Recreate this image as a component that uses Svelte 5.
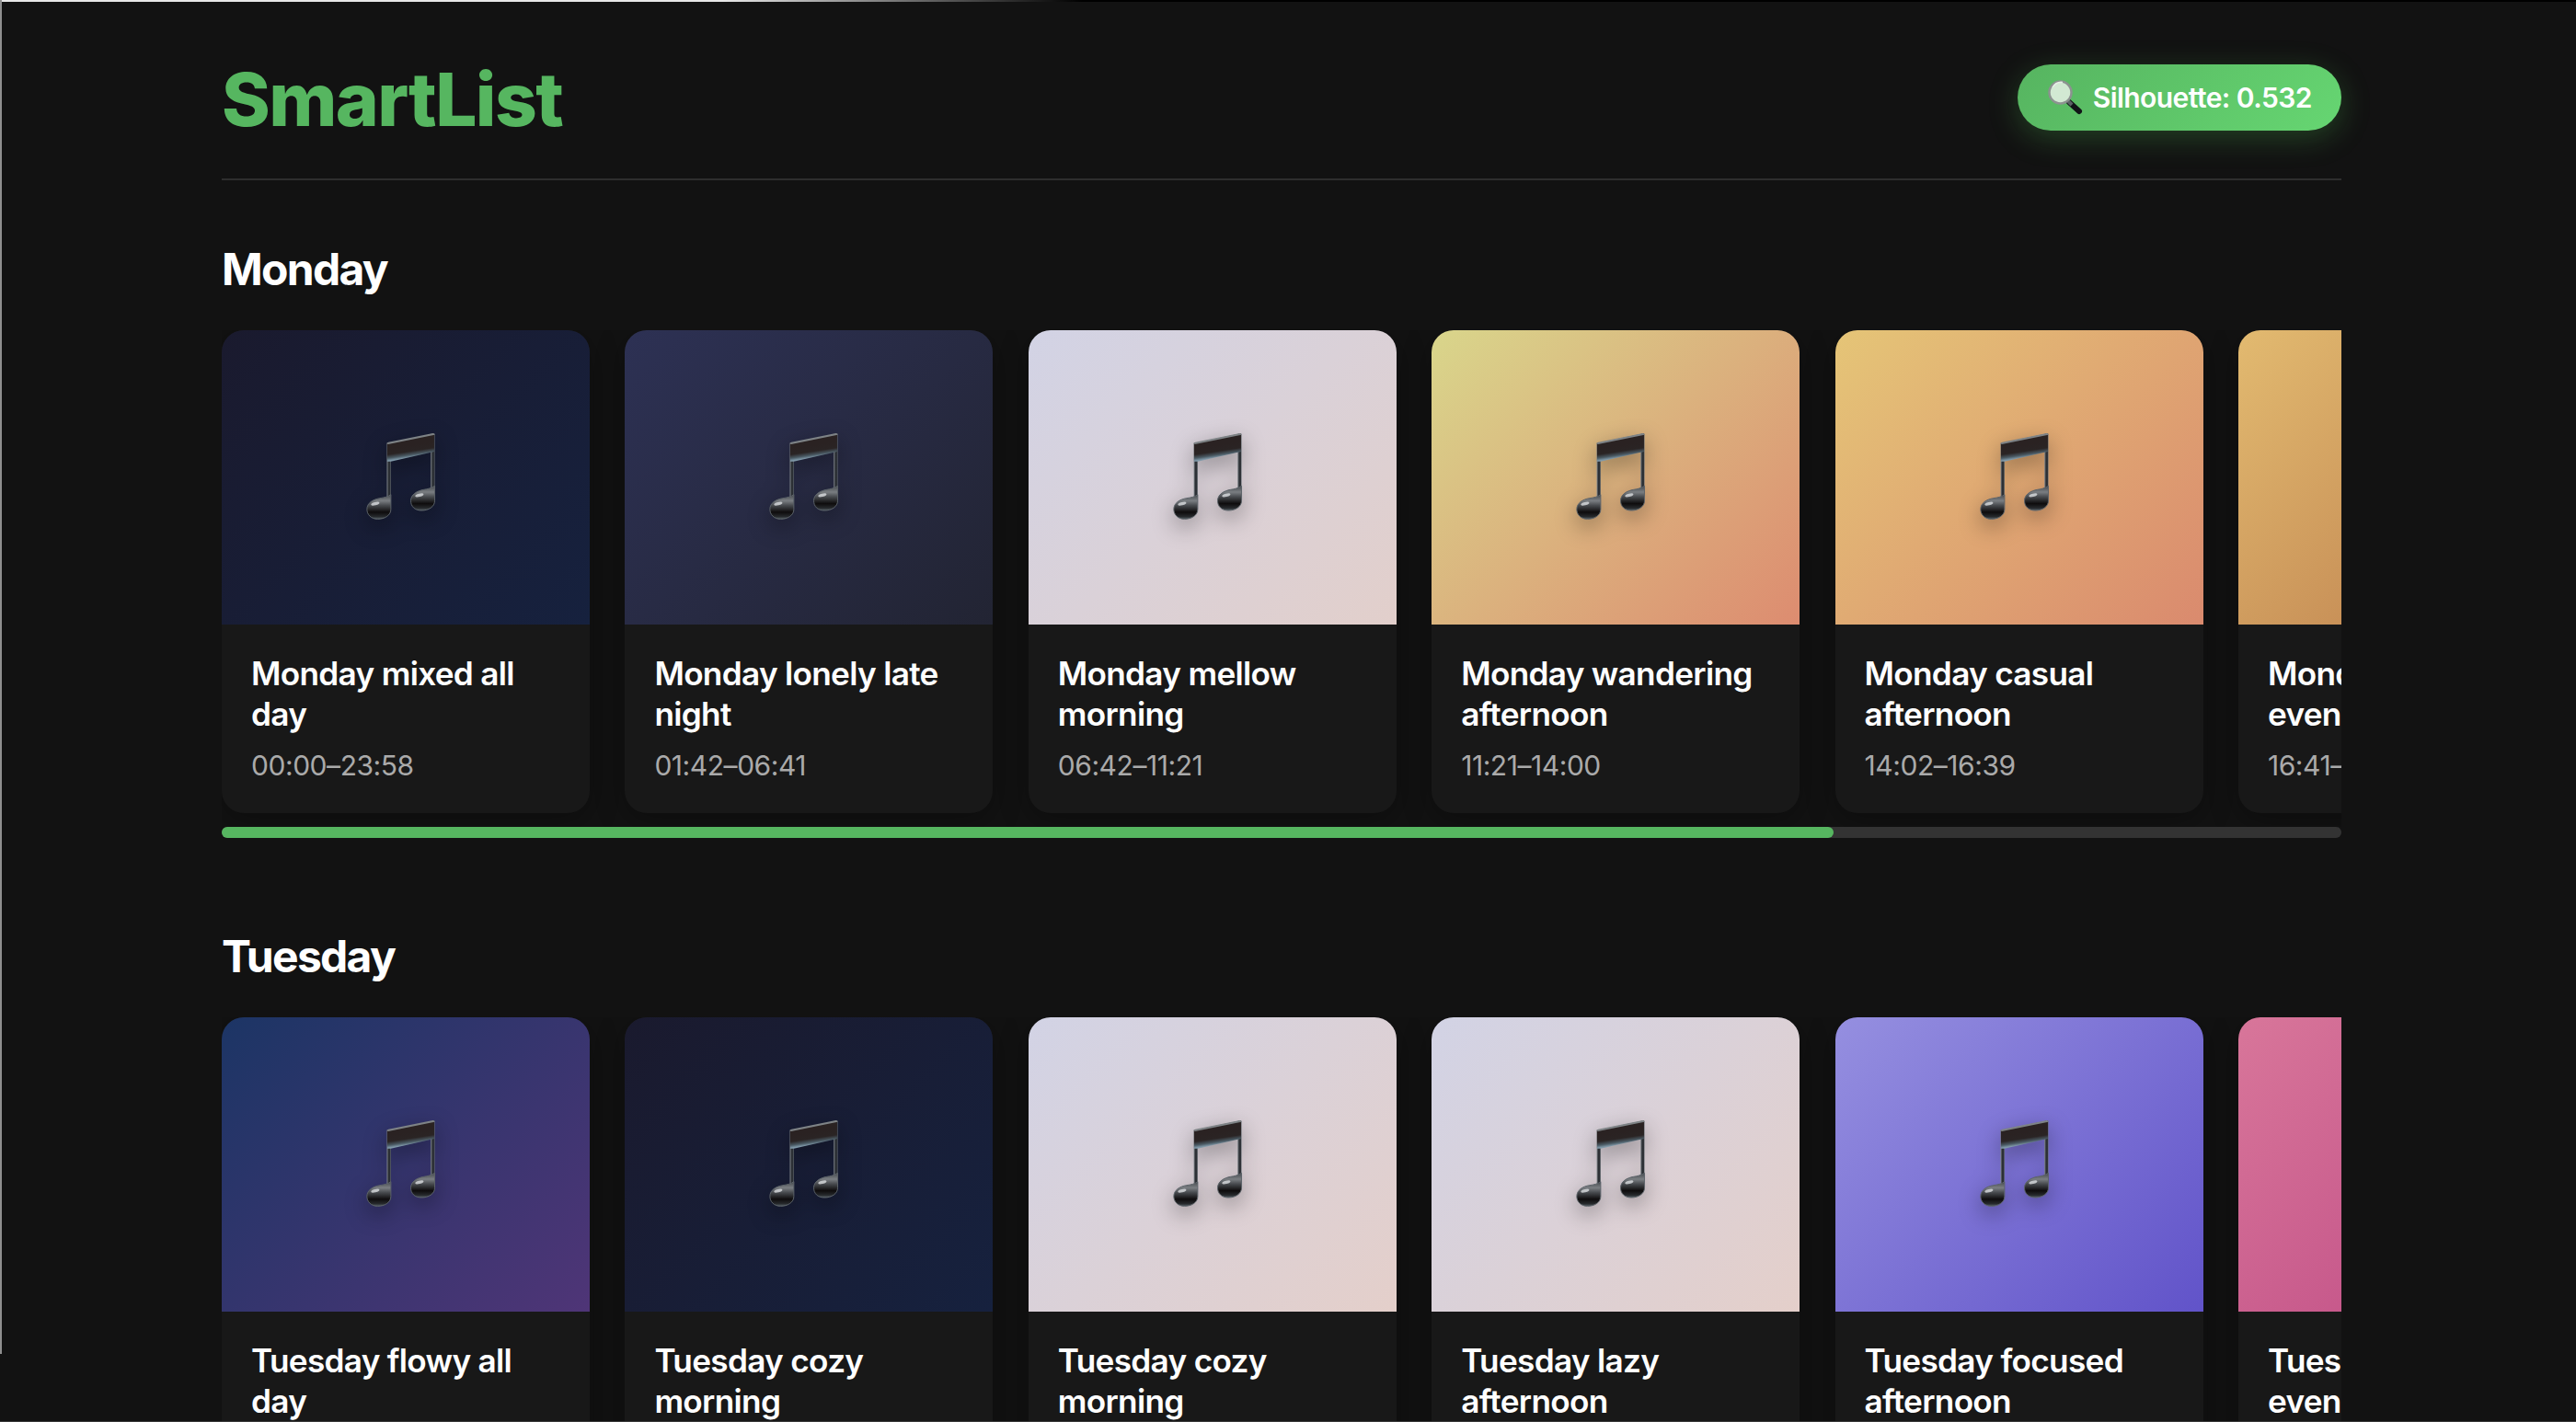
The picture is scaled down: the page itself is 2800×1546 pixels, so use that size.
<script>
  const days = [
    {
      name: 'Monday',
      lists: [
        { title: 'Monday mixed all day', time: '00:00–23:58', from: '#1a1a2e', to: '#16213e' },
        { title: 'Monday lonely late night', time: '01:42–06:41', from: '#2d3154', to: '#222433' },
        { title: 'Monday mellow morning', time: '06:42–11:21', from: '#d2d3e5', to: '#e2cfcb' },
        { title: 'Monday wandering afternoon', time: '11:21–14:00', from: '#d9d68b', to: '#dd8c70' },
        { title: 'Monday casual afternoon', time: '14:02–16:39', from: '#e5c577', to: '#da8a6e' },
        { title: 'Monday chill evening', time: '16:41–19:58', from: '#e2ba70', to: '#b87648' },
        { title: 'Monday dreamy night', time: '20:00–23:59', from: '#2d3154', to: '#16213e' }
      ]
    },
    {
      name: 'Tuesday',
      lists: [
        { title: 'Tuesday flowy all day', time: '00:00–23:57', from: '#1c3565', to: '#4f3577' },
        { title: 'Tuesday cozy morning', time: '02:10–06:35', from: '#1a1a2e', to: '#16213e' },
        { title: 'Tuesday cozy morning', time: '06:36–11:12', from: '#d2d3e5', to: '#e4cfca' },
        { title: 'Tuesday lazy afternoon', time: '11:13–14:05', from: '#d2d3e5', to: '#e4cfca' },
        { title: 'Tuesday focused afternoon', time: '14:06–16:44', from: '#958fe0', to: '#6153c9' },
        { title: 'Tuesday chill evening', time: '16:45–19:50', from: '#d8769a', to: '#bc4682' },
        { title: 'Tuesday dreamy night', time: '19:51–23:59', from: '#2d3154', to: '#16213e' }
      ]
    }
  ];

  // thumb is the visible part of the 7 card strip
  const cardWidth = 400;
  const gap = 38.4;
  const viewWidth = 2304;
  const thumbWidth = (list) => (viewWidth / (list.length * cardWidth + (list.length - 1) * gap)) * 100;
</script>

{#snippet note()}
  <svg class="note" viewBox="-6.6 -6 480 480" aria-hidden="true">
    <defs>
      <linearGradient id="stem" x1="0" x2="1" y1="0" y2="0">
        <stop offset="0" stop-color="#858b90" />
        <stop offset="0.4" stop-color="#2c3035" />
        <stop offset="0.75" stop-color="#2c3035" />
        <stop offset="1" stop-color="#646b71" />
      </linearGradient>
      <linearGradient id="beam" gradientUnits="userSpaceOnUse" x1="250" y1="128" x2="256" y2="168">
        <stop offset="0" stop-color="#2a2222" />
        <stop offset="0.5" stop-color="#2a2424" />
        <stop offset="0.8" stop-color="#4a5a64" />
        <stop offset="1" stop-color="#7f98a8" />
      </linearGradient>
      <linearGradient id="head" x1="0" x2="0" y1="0" y2="1">
        <stop offset="0" stop-color="#44484c" />
        <stop offset="0.25" stop-color="#7a7e82" />
        <stop offset="0.45" stop-color="#46494d" />
        <stop offset="0.72" stop-color="#0e0c0d" />
        <stop offset="0.9" stop-color="#26292c" />
        <stop offset="1" stop-color="#545e64" />
      </linearGradient>
    </defs>
    <rect x="172" y="122" width="13" height="175" fill="url(#stem)" />
    <rect x="315" y="92" width="13" height="178" fill="url(#stem)" />
    <path d="M173 122 L326 91 V150 L185 182 H173 Z" fill="url(#beam)" />
    <path d="M172 124 Q172 120 177 119 L322 90 Q328 89 328 95 L324 96 L176 126 Z" fill="#7e8386" />
    <path
      class="head"
      d="M328 262 V310 C328 330 308 342 285 342 C262 342 250 328 250 310 C250 290 270 278 292 274 C305 272 315 270 328 262 Z"
      fill="url(#head)"
    />
    <path
      class="head"
      d="M185 290 V338 C185 358 165 370 142 370 C120 370 107 355 107 338 C107 318 125 306 149 302 C162 300 175 298 185 290 Z"
      fill="url(#head)"
    />
    <ellipse cx="278" cy="292" rx="14" ry="5" transform="rotate(-14 278 292)" fill="#e4e7e9" opacity="0.75" />
    <ellipse cx="134" cy="320" rx="14" ry="5" transform="rotate(-14 134 320)" fill="#e4e7e9" opacity="0.75" />
  </svg>
{/snippet}

<div class="edge-top"></div>
<div class="edge-left"></div>
<div class="edge-bottom"></div>

<main class="page">
  <header class="header">
    <h1>SmartList</h1>
    <div class="score">
      <svg class="glass" viewBox="0 0 40 40" aria-hidden="true">
        <path d="M24 25 L35 35" stroke="#111417" stroke-width="6" stroke-linecap="round" />
        <path d="M23 24 L27 28" stroke="#5b6166" stroke-width="4" />
        <circle cx="14.5" cy="14.5" r="12" fill="#d2e9d3" stroke="#8c9290" stroke-width="2.5" />
        <path d="M6 9 A11 11 0 0 1 17 3.5" fill="none" stroke="#e6ece6" stroke-width="1.5" />
      </svg>
      <span>Silhouette: 0.532</span>
    </div>
  </header>

  {#each days as day}
    <section class="day">
      <h2>{day.name}</h2>
      <div class="row">
        {#each day.lists as list}
          <article class="card">
            <div class="cover" style="background: linear-gradient(135deg, {list.from}, {list.to})">
              {@render note()}
            </div>
            <div class="info">
              <h3>{list.title}</h3>
              <p>{list.time}</p>
            </div>
          </article>
        {/each}
      </div>
      <div class="track">
        <div class="thumb" style="width: {thumbWidth(day.lists)}%"></div>
      </div>
    </section>
  {/each}
</main>

<style>
  :global(body) {
    background: #121212;
    height: 1546px;
    overflow: hidden;
  }
  .page {
    width: 2304px;
    margin-left: 241px;
    padding-top: 58px;
    font-family: Inter, "Liberation Sans", sans-serif;
    color: #fff;
  }
  .edge-top {
    position: absolute;
    top: 0;
    left: 0;
    right: 0;
    height: 2px;
    background: linear-gradient(to right, #e8e8e8 0%, #e8e8e8 28%, #000 42%);
  }
  .edge-left {
    position: absolute;
    top: 0;
    left: 0;
    width: 2px;
    height: 1472px;
    background: #8f8f8f;
  }
  .edge-bottom {
    position: absolute;
    bottom: 0;
    left: 0;
    right: 0;
    height: 1px;
    background: #3a3a3a;
  }
  .header {
    display: flex;
    align-items: center;
    justify-content: space-between;
    padding-bottom: 40px;
    border-bottom: 2px solid #2e2e2e;
  }
  h1 {
    margin: 0;
    padding-top: 2px;
    margin-bottom: -2px;
    font-size: 80px;
    line-height: 96px;
    font-weight: 800;
    letter-spacing: -1.6px;
    color: #56b660;
  }
  .score {
    display: flex;
    align-items: center;
    gap: 10px;
    height: 72px;
    box-sizing: border-box;
    padding: 0 32px;
    border-radius: 36px;
    background: linear-gradient(135deg, #56b460, #66d672);
    box-shadow: 0 8px 32px rgba(76, 175, 80, 0.3);
    font-size: 30px;
    font-weight: 600;
    letter-spacing: -0.55px;
  }
  .glass {
    width: 40px;
    height: 40px;
  }
  .day {
    margin-top: 68px;
    margin-bottom: 100px;
  }
  h2 {
    margin: 0 0 37px;
    font-size: 48px;
    line-height: 58px;
    font-weight: 700;
    letter-spacing: -1.7px;
  }
  .row {
    display: flex;
    gap: 38.4px;
    overflow: hidden;
    padding-bottom: 15px;
  }
  .card {
    flex: 0 0 400px;
    height: 525px;
    border-radius: 24px;
    overflow: hidden;
    background: #181818;
    box-shadow: 0 8px 32px rgba(0, 0, 0, 0.3);
  }
  .cover {
    height: 320px;
    display: flex;
    align-items: center;
    justify-content: center;
  }
  .note {
    width: 160px;
    height: 160px;
    filter: drop-shadow(0 8px 12px rgba(0, 0, 0, 0.35));
  }
  .head {
    stroke: #5c6369;
    stroke-width: 3;
  }
  .info {
    padding: 31px 32px 32px;
  }
  h3 {
    margin: 0;
    font-size: 35.2px;
    line-height: 44px;
    font-weight: 600;
    letter-spacing: -0.7px;
  }
  p {
    margin: 16px 0 0;
    font-size: 30px;
    line-height: 36px;
    letter-spacing: -0.45px;
    color: #aaa;
  }
  .track {
    height: 12px;
    border-radius: 6px;
    background: #333;
  }
  .thumb {
    height: 100%;
    border-radius: 6px;
    background: #56b660;
  }
</style>
